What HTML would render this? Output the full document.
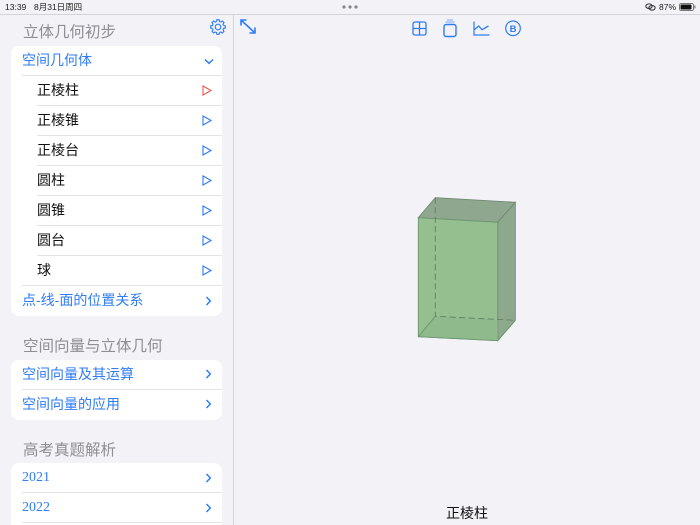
<!DOCTYPE html>
<html lang="zh">
<head>
<meta charset="utf-8">
<style>
html,body{margin:0;padding:0;width:700px;height:525px;overflow:hidden;background:#f2f2f7}
#p{position:relative;width:700px;height:525px;overflow:hidden;background:#f2f2f7;font-family:"Liberation Sans","Noto Sans CJK SC",sans-serif;color:#000}
.a{position:absolute;white-space:nowrap}
.t{position:absolute;left:23px;font-size:15.5px;line-height:20px;color:#8e8e93}
.card{position:absolute;left:11px;width:211px;background:#fff;border-radius:8px;overflow:hidden}
.r{position:absolute;height:30px;line-height:29px;font-size:14px;white-space:nowrap}
.b{left:11px;color:#2f7cf6}
.k{left:26px;color:#111}
.l{position:absolute;height:1px;background:#e4e4e8;right:0}
svg{position:absolute;overflow:visible}
</style>
</head>
<body>
<div id="p">
<div class="a" style="left:0;top:14px;width:700px;height:1px;background:#d4d4d8"></div>
<div class="a" style="left:233px;top:15px;width:1px;height:510px;background:#d4d4d8"></div>
<div class="a" style="left:5px;top:1px;font-size:8.5px;line-height:12px;color:#222">13:39</div>
<div class="a" style="left:34px;top:1px;font-size:8.5px;line-height:12px;color:#222">8月31日周四</div>
<svg style="left:342px;top:5px" width="16" height="4"><circle cx="2" cy="2" r="1.6" fill="#85858a"/><circle cx="8" cy="2" r="1.6" fill="#85858a"/><circle cx="14" cy="2" r="1.6" fill="#85858a"/></svg>
<svg style="left:645px;top:3px" width="11" height="8" fill="none" stroke="#333" stroke-width="1"><ellipse cx="4" cy="3.2" rx="3.2" ry="2.3"/><ellipse cx="7" cy="4.8" rx="3.2" ry="2.3"/></svg>
<div class="a" style="left:659px;top:1px;font-size:8.5px;line-height:12px;color:#222">87%</div>
<svg style="left:679px;top:3px" width="17" height="8"><rect x=".5" y=".5" width="14" height="7" rx="1.8" fill="none" stroke="#777"/><rect x="1.5" y="1.5" width="11" height="5" rx="1" fill="#111"/><rect x="15.3" y="2.6" width="1.2" height="2.8" fill="#777"/></svg>

<div class="t" style="top:23px">立体几何初步</div>
<svg style="left:210.300px;top:19.300px" width="16" height="16" fill="none" stroke="#2f7cf6" stroke-width="1.150" stroke-linejoin="round">
 <g transform="translate(8 8)">
  <path d="M-1.480-5.500L-1.160-7.310H1.160L1.480-5.500L2.850-4.940"/>
  <path transform="rotate(45)" d="M-1.480-5.500L-1.160-7.310H1.160L1.480-5.500L2.850-4.940"/>
  <path transform="rotate(90)" d="M-1.480-5.500L-1.160-7.310H1.160L1.480-5.500L2.850-4.940"/>
  <path transform="rotate(135)" d="M-1.480-5.500L-1.160-7.310H1.160L1.480-5.500L2.850-4.940"/>
  <path transform="rotate(180)" d="M-1.480-5.500L-1.160-7.310H1.160L1.480-5.500L2.850-4.940"/>
  <path transform="rotate(225)" d="M-1.480-5.500L-1.160-7.310H1.160L1.480-5.500L2.850-4.940"/>
  <path transform="rotate(270)" d="M-1.480-5.500L-1.160-7.310H1.160L1.480-5.500L2.850-4.940"/>
  <path transform="rotate(315)" d="M-1.480-5.500L-1.160-7.310H1.160L1.480-5.500L2.850-4.940"/>
  <circle r="2.800"/>
 </g>
</svg>

<div class="card" style="top:46px;height:270px">
 <div class="r b" style="top:0">空间几何体</div>
 <div class="l" style="left:11px;top:29px"></div>
 <div class="r k" style="top:30px">正棱柱</div><div class="l" style="left:26px;top:59px"></div>
 <div class="r k" style="top:60px">正棱锥</div><div class="l" style="left:26px;top:89px"></div>
 <div class="r k" style="top:90px">正棱台</div><div class="l" style="left:26px;top:119px"></div>
 <div class="r k" style="top:120px">圆柱</div><div class="l" style="left:26px;top:149px"></div>
 <div class="r k" style="top:150px">圆锥</div><div class="l" style="left:26px;top:179px"></div>
 <div class="r k" style="top:180px">圆台</div><div class="l" style="left:26px;top:209px"></div>
 <div class="r k" style="top:210px">球</div><div class="l" style="left:11px;top:239px"></div>
 <div class="r b" style="top:240px">点-线-面的位置关系</div>
 <svg style="left:193px;top:12px" width="10" height="7" fill="none" stroke="#2f7cf6" stroke-width="1.500"><path d="M1 1.500 5 5.300 9 1.500"/></svg>
 <svg style="left:191px;top:39px" width="10" height="11" fill="none" stroke="#ef5a50" stroke-width="1.100"><path d="M1 1v9l8-4.500z"/></svg>
 <svg style="left:191px;top:69px" width="10" height="11" fill="none" stroke="#2f7cf6" stroke-width="1.100"><path d="M1 1v9l8-4.500z"/></svg>
 <svg style="left:191px;top:99px" width="10" height="11" fill="none" stroke="#2f7cf6" stroke-width="1.100"><path d="M1 1v9l8-4.500z"/></svg>
 <svg style="left:191px;top:129px" width="10" height="11" fill="none" stroke="#2f7cf6" stroke-width="1.100"><path d="M1 1v9l8-4.500z"/></svg>
 <svg style="left:191px;top:159px" width="10" height="11" fill="none" stroke="#2f7cf6" stroke-width="1.100"><path d="M1 1v9l8-4.500z"/></svg>
 <svg style="left:191px;top:189px" width="10" height="11" fill="none" stroke="#2f7cf6" stroke-width="1.100"><path d="M1 1v9l8-4.500z"/></svg>
 <svg style="left:191px;top:219px" width="10" height="11" fill="none" stroke="#2f7cf6" stroke-width="1.100"><path d="M1 1v9l8-4.500z"/></svg>
 <svg style="left:194px;top:250px" width="7" height="10" fill="none" stroke="#2f7cf6" stroke-width="1.500"><path d="M1.500 1 5.300 5 1.500 9"/></svg>
</div>

<div class="t" style="top:337px">空间向量与立体几何</div>
<div class="card" style="top:360px;height:60px">
 <div class="r b" style="top:0">空间向量及其运算</div>
 <div class="l" style="left:11px;top:29px"></div>
 <div class="r b" style="top:30px">空间向量的应用</div>
 <svg style="left:194px;top:9px" width="7" height="10" fill="none" stroke="#2f7cf6" stroke-width="1.500"><path d="M1.500 1 5.300 5 1.500 9"/></svg>
 <svg style="left:194px;top:39px" width="7" height="10" fill="none" stroke="#2f7cf6" stroke-width="1.500"><path d="M1.500 1 5.300 5 1.500 9"/></svg>
</div>

<div class="t" style="top:441px">高考真题解析</div>
<div class="card" style="top:463px;height:62px;border-radius:8px 8px 0 0">
 <div class="r b" style="top:0;font-family:'Liberation Serif','Noto Serif CJK SC',serif">2021</div>
 <div class="l" style="left:11px;top:29px"></div>
 <div class="r b" style="top:30px;font-family:'Liberation Serif','Noto Serif CJK SC',serif">2022</div>
 <div class="l" style="left:11px;top:59px"></div>
 <svg style="left:194px;top:10px" width="7" height="10" fill="none" stroke="#2f7cf6" stroke-width="1.500"><path d="M1.500 1 5.300 5 1.500 9"/></svg>
 <svg style="left:194px;top:40px" width="7" height="10" fill="none" stroke="#2f7cf6" stroke-width="1.500"><path d="M1.500 1 5.300 5 1.500 9"/></svg>
</div>

<svg style="left:0;top:0" width="700" height="525" fill="none" stroke="#2f7cf6" stroke-width="1.500">
 <path d="M241.500 20.500 254.500 32.500M241 25.500V20h5.500M255 27.500V33h-5.500" stroke-width="1.600"/>
 <rect x="413" y="22" width="13" height="13" rx="1.800" stroke-width="1.300"/>
 <path d="M419.500 22v13M413 28.500h13" stroke-width="1.300"/>
 <rect x="444" y="24.500" width="12" height="12" rx="2.200" stroke-width="1.400"/>
 <path d="M445.500 22h9M447 20h6" stroke="#7fabf5" stroke-width="1"/>
 <path d="M474 21.500V35H489.500" stroke-width="1.200"/>
 <path d="M474.500 29.500 478.700 26 482 29.700 488.500 26" stroke-width="1.300"/>
 <circle cx="513" cy="28.300" r="7.300" stroke-width="1.200"/>
 <text x="513" y="31.800" text-anchor="middle" font-size="9.500" font-weight="bold" fill="#2f7cf6" stroke="none" font-family="Liberation Sans">B</text>
</svg>

<svg style="left:0;top:0" width="700" height="525">
 <polygon points="435.300,197.700 515.300,202.300 497.700,222.300 418.300,217.700" fill="#8fa68f" stroke="#6f8a70" stroke-width=".9"/>
 <polygon points="497.700,222.300 515.300,202.300 515.300,320.300 497.700,340.700" fill="#8ea88e" stroke="#6f8a70" stroke-width=".9"/>
 <polygon points="418.300,217.700 497.700,222.300 497.700,340.700 418.300,336.700" fill="#95bf8f" stroke="#6c9670" stroke-width=".9"/>
 <polygon points="418.300,336.700 435.300,316.300 497.700,319.500 497.700,340.700" fill="#8fba8b"/>
 <path d="M418.300 336.700 435.300 316.300M497.700 340.700 515.300 320.300M418.300 336.700 497.700 340.700" fill="none" stroke="#6c9670" stroke-width=".9"/>
 <path d="M435.300 197.700V316.300L515.300 320.300" fill="none" stroke="#5f8062" stroke-width=".9" stroke-dasharray="6 3.500"/>
</svg>

<div class="a" style="left:446px;top:503px;font-size:14px;line-height:20px;color:#111">正棱柱</div>
</div>
</body>
</html>
